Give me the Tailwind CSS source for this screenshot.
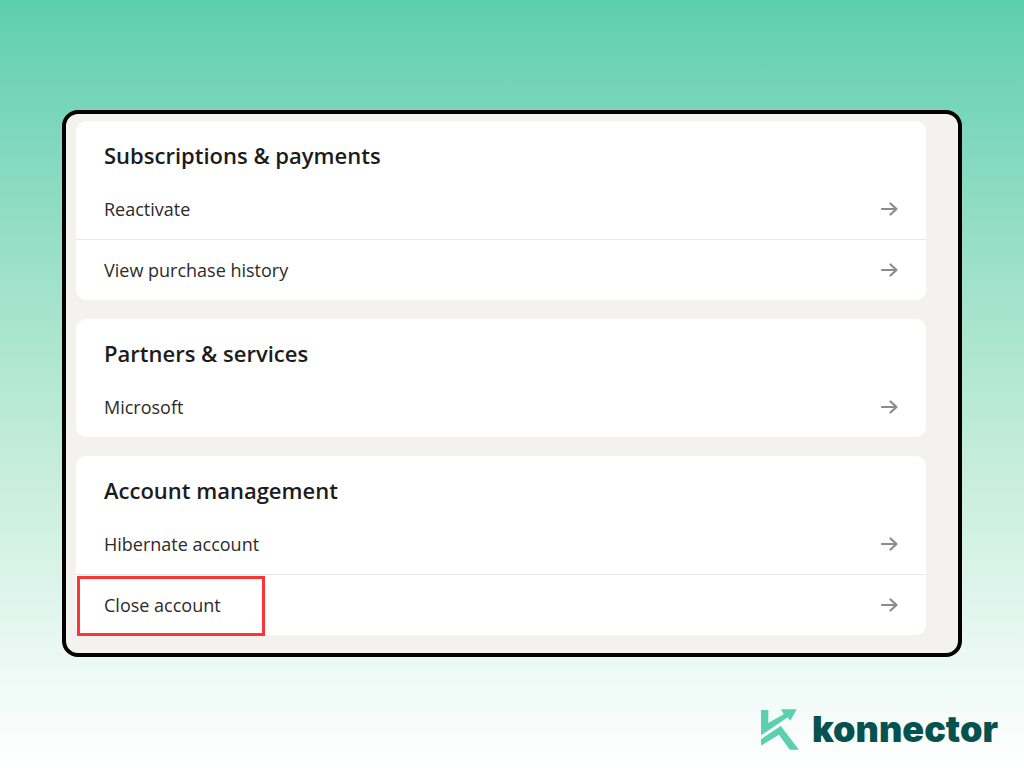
<!DOCTYPE html>
<html lang="en">
  <head>
    <meta charset="UTF-8" />
    <meta name="viewport" content="width=device-width, initial-scale=1.0" />
    <title>Account preferences</title>
    <script src="https://cdn.jsdelivr.net/npm/@tailwindcss/browser@4"></script>
  </head>
  <body
    class="flex min-h-screen flex-col bg-linear-to-b from-[#5ccfad] to-white font-['Segoe_UI','Open_Sans',sans-serif]"
  >
    <svg class="hidden">
      <symbol id="arrow" viewBox="0 0 18 16">
        <path
          d="M2 8H16.500M10.500 2.500l6 5.500-6 5.500"
          fill="none"
          stroke="#8c8c8c"
          stroke-width="2.200"
          stroke-linecap="round"
          stroke-linejoin="round"
        />
      </symbol>
    </svg>

    <main class="px-[62px] pt-[110px]">
      <div
        class="flex flex-col gap-[19px] rounded-2xl border-4 border-black bg-[#f3f2ee] pt-[7px] pr-8 pb-[18px] pl-[10px] text-lg text-[#2b2b2b]"
      >
        <section class="rounded-[10px] bg-white">
          <h2 class="px-7 pt-[18px] pb-2 text-[22px] leading-8 font-semibold text-[#1c1c1c]">
            Subscriptions &amp; payments
          </h2>
          <ul class="divide-y divide-[#e8e8e8]">
            <li>
              <a href="#" class="flex h-[60px] items-center justify-between px-7">
                Reactivate
                <svg class="h-4 w-[18px]"><use href="#arrow" /></svg>
              </a>
            </li>
            <li>
              <a href="#" class="flex h-[60px] items-center justify-between px-7">
                View purchase history
                <svg class="h-4 w-[18px]"><use href="#arrow" /></svg>
              </a>
            </li>
          </ul>
        </section>

        <section class="rounded-[10px] bg-white">
          <h2 class="px-7 pt-[18px] pb-2 text-[22px] leading-8 font-semibold text-[#1c1c1c]">
            Partners &amp; services
          </h2>
          <ul>
            <li>
              <a href="#" class="flex h-[60px] items-center justify-between px-7">
                Microsoft
                <svg class="h-4 w-[18px]"><use href="#arrow" /></svg>
              </a>
            </li>
          </ul>
        </section>

        <section class="rounded-[10px] bg-white">
          <h2 class="px-7 pt-[18px] pb-2 text-[22px] leading-8 font-semibold text-[#1c1c1c]">
            Account management
          </h2>
          <ul class="divide-y divide-[#e8e8e8]">
            <li>
              <a href="#" class="flex h-[60px] items-center justify-between px-7">
                Hibernate account
                <svg class="h-4 w-[18px]"><use href="#arrow" /></svg>
              </a>
            </li>
            <li class="relative">
              <a href="#" class="flex h-[60px] items-center justify-between px-7">
                Close account
                <svg class="h-4 w-[18px]"><use href="#arrow" /></svg>
              </a>
              <!-- highlight -->
              <div
                class="pointer-events-none absolute -bottom-px left-px h-[60px] w-[188px] border-3 border-[#fb3536]"
              ></div>
            </li>
          </ul>
        </section>
      </div>
    </main>

    <footer class="mt-auto flex items-center justify-end gap-3 pr-[26px] pb-[17px]">
      <svg class="h-[43px] w-10" viewBox="0 0 40 43" fill="#5ccfad">
        <path d="M1 2h7.300v13l15.400-8.700L21 1.300h15.700L30.300 12.700l-2.600-3.400L1 27.300z" />
        <path d="M1 31.300L20.700 18 39 41.700h-9.300L19 26.700 1 37.700z" />
      </svg>
      <span
        class="font-['Inter',sans-serif] text-4xl leading-[44px] font-black text-[#05524f]"
        >konnector</span
      >
    </footer>
  </body>
</html>
